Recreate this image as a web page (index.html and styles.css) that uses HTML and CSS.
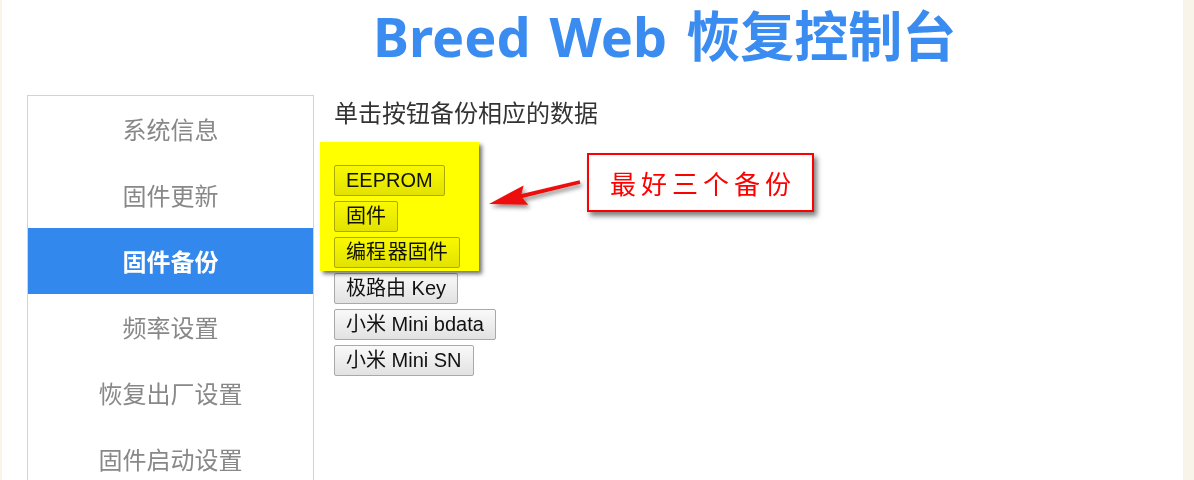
FILE: index.html
```html
<!DOCTYPE html>
<html lang="zh-CN">
<head>
<meta charset="utf-8">
<title>Breed Web 恢复控制台</title>
<link rel="stylesheet" href="styles.css">
</head>
<body>
<div class="page">
  <div class="edge edge-left"></div>
  <div class="main">
    <h1 class="title">Breed Web 恢复控制台</h1>
    <div class="layout">
      <nav class="sidebar">
        <a class="nav-item">系统信息</a>
        <a class="nav-item">固件更新</a>
        <a class="nav-item active">固件备份</a>
        <a class="nav-item">频率设置</a>
        <a class="nav-item">恢复出厂设置</a>
        <a class="nav-item">固件启动设置</a>
      </nav>
      <section class="content">
        <p class="desc">单击按钮备份相应的数据</p>
        <div class="buttons">
          <button class="btn">EEPROM</button>
          <button class="btn">固件</button>
          <button class="btn">编程&#8202;器固件</button>
          <button class="btn">极路由 Key</button>
          <button class="btn">小米 Mini bdata</button>
          <button class="btn">小米 Mini SN</button>
        </div>
      </section>
    </div>
  </div>
  <div class="edge edge-right"></div>

  <div class="highlight"></div>
  <svg class="arrow" width="110" height="40" viewBox="0 0 110 40">
    <defs>
      <filter id="sh" x="-20%" y="-50%" width="140%" height="200%">
        <feDropShadow dx="2" dy="3" stdDeviation="2" flood-color="#000" flood-opacity="0.45"/>
      </filter>
    </defs>
    <path d="M3 28 L37.6 9.4 L35.5 18.1 L93.6 4.3 L94.4 7.7 L36.5 22 L42.3 28.8 Z" fill="#ee1111" filter="url(#sh)"/>
  </svg>
  <div class="note">最好三个备份</div>
</div>
</body>
</html>
```
FILE: styles.css
```css
html, body {
  margin: 0;
  padding: 0;
  background: #ffffff;
}

.page {
  position: relative;
  display: flex;
  width: 1194px;
  height: 480px;
  overflow: hidden;
}

.edge {
  flex: none;
  background: #f8f4ea;
}
.edge-left { width: 2px; }
.edge-right { width: 11px; }

.main {
  flex: 1;
  background: #ffffff;
}

.title {
  margin: 0;
  padding: 0 0 23px 371px;
  font-family: "Noto Sans", "Noto Sans CJK SC", sans-serif;
  font-weight: 700;
  font-size: 54px;
  line-height: 72px;
  word-spacing: 5px;
  color: #3a8cf0;
  white-space: nowrap;
}

.layout {
  display: flex;
  align-items: flex-start;
  padding-left: 25px;
}

.sidebar {
  flex: none;
  width: 285px;
  border: 1px solid #7dffd6;
  display: flex;
  flex-direction: column;
}

.nav-item {
  display: block;
  height: 66px;
  line-height: 66px;
  text-align: center;
  font-family: "Noto Sans CJK SC", sans-serif;
  font-size: 24px;
  color: #888888;
}

.nav-item.active {
  background: #3388ee;
  color: #ffffff;
  font-weight: 700;
}

.content {
  padding-left: 20px;
}

.desc {
  margin: 0;
  padding-top: 2px;
  height: 63px;
  font-family: "Noto Sans CJK SC", sans-serif;
  font-size: 24px;
  line-height: 30px;
  color: #333333;
}

.buttons {
  display: flex;
  flex-direction: column;
  align-items: flex-start;
  gap: 5px;
  padding-top: 5px;
}

.btn {
  height: 31px;
  margin: 0;
  padding: 3px 11px;
  border: 1px solid #a9a9a9;
  border-radius: 2px;
  background: linear-gradient(#f9f9f9, #e2e2e2);
  font-family: "Liberation Sans", "Noto Sans CJK SC", sans-serif;
  font-size: 20px;
  line-height: 23px;
  color: #111111;
  white-space: nowrap;
}

.highlight {
  position: absolute;
  left: 320px;
  top: 142px;
  width: 159px;
  height: 129px;
  background: #ffff00;
  mix-blend-mode: multiply;
  box-shadow: 3px 3px 4px rgba(0, 0, 0, 0.55);
}

.arrow {
  position: absolute;
  left: 486px;
  top: 176px;
  overflow: visible;
}

.note {
  position: absolute;
  left: 587px;
  top: 153px;
  width: 227px;
  height: 59px;
  box-sizing: border-box;
  border: 2px solid #ff0000;
  background: #ffffff;
  box-shadow: 3px 4px 5px rgba(0, 0, 0, 0.5);
  text-align: center;
  font-family: "Noto Sans CJK SC", sans-serif;
  font-size: 26px;
  line-height: 55px;
  letter-spacing: 5px;
  text-indent: 5px;
  color: #ff0000;
}
```
